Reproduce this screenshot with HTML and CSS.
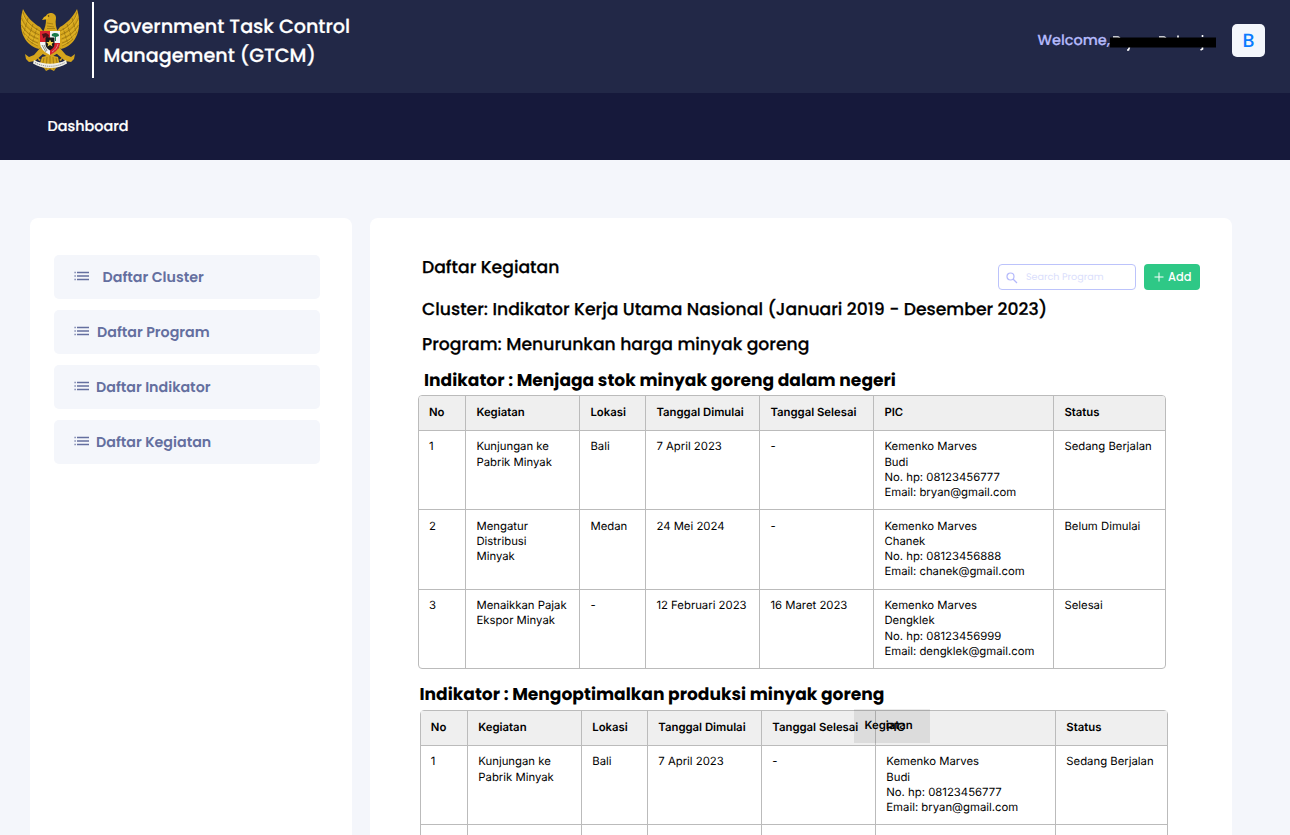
FILE: index.html
```html
<!DOCTYPE html>
<html lang="id">
<head>
<meta charset="utf-8">
<title>Government Task Control Management</title>
<link rel="stylesheet" href="styles.css">
</head>
<body>
<header class="topbar">
  <svg class="emblem" viewBox="0 0 60 64" aria-hidden="true">
    <g id="wing">
      <path fill="#d5a51c" d="M3 1C0 10 0 22 4 29c3 6 8 10 15 12l4-3V23l-3-4C14 16 7 9 3 1z"/>
      <path fill="none" stroke="#94700f" stroke-width=".7" d="M3 4c2 9 9 15 17 19M1.500 10c3 8 9 13 18 17M1.500 17c4 7 9 11 17 14M3 24c4 6 9 9 15 11M7 31c3 3 7 5 11 7M8 10l-4 14M13 16l-5 15M17 20l-5 16"/>
      <path fill="none" stroke="#e8c034" stroke-width=".7" d="M2.500 6c3 9 9 14 17 18.500M1.500 13c3 8 9 12 17 16M2 20c4 7 9 10 16 13M5 27c4 5 8 8 13 10"/>
    </g>
    <use href="#wing" transform="matrix(-1 0 0 1 60 0)"/>
    <path fill="#d5a51c" d="M23 24c2-4 3-8 3-12-1-3 0-6 4-7 4 0 6 2 6 5-1 5 0 10 2 14v21l-8 5-9-5z"/>
    <path fill="#e5b51f" d="M28 7l-4 2-2 3 6-1z"/>
    <circle cx="28.500" cy="8" r=".8" fill="#4b3605"/>
    <path fill="none" stroke="#94700f" stroke-width=".7" d="M27 15l6 1M27 18l7 1M27 20.500l8 0"/>
    <path fill="#d5a51c" d="M21 39l-7 8-5 2-4-3 1 5 3 3 6-1 9-8zM39 39l7 8 5 2 4-3-1 5-3 3-6-1-9-8z"/>
    <path fill="#d5a51c" d="M22 49l8-2 8 2 2 9-4 2-2 3-4-2-4 2-2-3-5-2z"/>
    <path fill="none" stroke="#94700f" stroke-width=".8" d="M24 50l-2 9M27 49l-1 13M30 48v14M33 49l1 13M36 50l2 9"/>
    <path fill="#d9232e" d="M20 23h10v12H20zM30 34h10c0 6-4 10-10 13z"/>
    <path fill="#f5f5f5" d="M30 23h10v12H30zM20 34h10v13c-6-3-10-7-10-13z"/>
    <path fill="#4c1218" d="M22 26l4-1 3 2-1 4h-1.500l-1-2.500-2 2z"/>
    <path fill="none" stroke="#8a8f86" stroke-width="1" d="M22 37l4 7M24 37l3 6"/>
    <path fill="none" stroke="#d9a0a0" stroke-width=".8" d="M38 36c-1 4-3 6-6 8"/>
    <path fill="#191919" d="M25.500 29.500h9v6c0 4-2 5-4.500 7-2.500-2-4.500-3-4.500-7z"/>
    <path fill="#18794a" d="M32 28c-1-2 1-3 3-3 3 0 4 1 4 3l-3 1v4h-1v-4z"/>
    <path fill="#f5d44b" d="M30 31.500l1.100 2.600h2.700l-2.100 1.800.8 2.700-2.500-1.600-2.500 1.600.8-2.700-2.100-1.800h2.700z"/>
    <path fill="#f0efe8" d="M14 52c9 5 23 5 32 0l1 3.500c-10 6-24 6-34 0z"/>
    <path fill="none" stroke="#888" stroke-width=".9" stroke-dasharray="1.300 .8" d="M15 54.500c9 5 21 5 30 0"/>
    <path fill="#d5a51c" d="M17 49l2 4 2-1zM43 49l-2 4-2-1z"/>
  </svg>
  <div class="rule"></div>
  <h1 class="brand">Government Task Control<br>Management (GTCM)</h1>
  <div class="user">
    <span class="welcome">Welcome,</span>
    <svg class="redacted" viewBox="0 0 106 20" aria-hidden="true">
      <path fill="none" stroke="#fff" stroke-width="1.600" d="M3 6h5l2 1M49 6h5l2 1M68 4.500v3M92.500 4v2M19.500 16l-1 3h-1.500M92.500 16v2l-2 1"/>
      <path d="M0 6.500h106v10H0z"/>
    </svg>
    <span class="avatar">B</span>
  </div>
</header>
<nav class="nav"><a>Dashboard</a></nav>
<main class="layout">
  <aside class="card side">
    <a class="item wide"><svg class="list" viewBox="0 0 16 10"><path d="M.500 1.500h1.200M3 1.500h12M.500 5h1.200M3 5h12M.500 8.500h1.200M3 8.500h12"/></svg><span>Daftar Cluster</span></a>
    <a class="item"><svg class="list" viewBox="0 0 16 10"><path d="M.500 1.500h1.200M3 1.500h12M.500 5h1.200M3 5h12M.500 8.500h1.200M3 8.500h12"/></svg><span>Daftar Program</span></a>
    <a class="item tight"><svg class="list" viewBox="0 0 16 10"><path d="M.500 1.500h1.200M3 1.500h12M.500 5h1.200M3 5h12M.500 8.500h1.200M3 8.500h12"/></svg><span>Daftar Indikator</span></a>
    <a class="item tight"><svg class="list" viewBox="0 0 16 10"><path d="M.500 1.500h1.200M3 1.500h12M.500 5h1.200M3 5h12M.500 8.500h1.200M3 8.500h12"/></svg><span>Daftar Kegiatan</span></a>
  </aside>
  <section class="card content">
    <div class="head">
      <h2 class="h">Daftar Kegiatan</h2>
      <div class="tools">
        <div class="search"><svg class="glass" viewBox="0 0 12 12"><circle cx="4.500" cy="4.500" r="3.500"/><path d="M7 7l4 4"/></svg><span>Search Program</span></div>
        <button class="add"><svg class="plus" viewBox="0 0 10 10"><path d="M5 .500v9M.500 5h9"/></svg><span>Add</span></button>
      </div>
    </div>
    <h2 class="h cluster">Cluster: Indikator Kerja Utama Nasional (Januari 2019 - Desember 2023)</h2>
    <h2 class="h program">Program: Menurunkan harga minyak goreng</h2>
    <h3 class="h ind ind1">Indikator : Menjaga stok minyak goreng dalam negeri</h3>
    <div class="table">
      <div class="row th"><div>No</div><div>Kegiatan</div><div>Lokasi</div><div>Tanggal Dimulai</div><div>Tanggal Selesai</div><div>PIC</div><div>Status</div></div>
      <div class="row"><div>1</div><div>Kunjungan ke<br>Pabrik Minyak</div><div>Bali</div><div>7 April 2023</div><div>-</div><div>Kemenko Marves<br>Budi<br>No. hp: 08123456777<br>Email: bryan@gmail.com</div><div>Sedang Berjalan</div></div>
      <div class="row"><div>2</div><div>Mengatur<br>Distribusi<br>Minyak</div><div>Medan</div><div>24 Mei 2024</div><div>-</div><div>Kemenko Marves<br>Chanek<br>No. hp: 08123456888<br>Email: chanek@gmail.com</div><div>Belum Dimulai</div></div>
      <div class="row"><div>3</div><div>Menaikkan Pajak<br>Ekspor Minyak</div><div>-</div><div>12 Februari 2023</div><div>16 Maret 2023</div><div>Kemenko Marves<br>Dengklek<br>No. hp: 08123456999<br>Email: dengklek@gmail.com</div><div>Selesai</div></div>
    </div>
    <h3 class="h ind ind2">Indikator : Mengoptimalkan produksi minyak goreng</h3>
    <div class="table second">
      <div class="row th"><div>No</div><div>Kegiatan</div><div>Lokasi</div><div>Tanggal Dimulai</div><div>Tanggal Selesai</div><div>PIC</div><div>Status</div></div>
      <div class="row"><div>1</div><div>Kunjungan ke<br>Pabrik Minyak</div><div>Bali</div><div>7 April 2023</div><div>-</div><div>Kemenko Marves<br>Budi<br>No. hp: 08123456777<br>Email: bryan@gmail.com</div><div>Sedang Berjalan</div></div>
      <div class="row"><div></div><div></div><div></div><div></div><div></div><div></div><div></div></div>
      <div class="drag">Kegiatan</div>
    </div>
  </section>
</main>
</body>
</html>
```
FILE: styles.css
```css
* { box-sizing: border-box; }
body { margin: 0; height: 835px; overflow: hidden; background: #f4f6fb; font-family: Poppins, Inter, sans-serif; color: #000; text-rendering: geometricPrecision; }
h1, h2, h3 { margin: 0; }
.topbar { height: 93px; background: #222847; display: flex; align-items: flex-start; padding-left: 20px; }
.emblem { width: 60px; height: 64px; margin-top: 8px; }
.rule { width: 2px; height: 76px; margin: 2px 0 0 12px; background: #fff; }
.brand { margin: 13px 0 0 9.5px; font-size: 19.15px; line-height: 28.6px; font-weight: 500; color: #fff; -webkit-text-stroke: .2px; white-space: nowrap; }
.user { margin: 24px 25px 0 auto; display: flex; align-items: center; height: 33px; }
.welcome { padding-top: 2px; font-size: 14.5px; font-weight: 500; color: #b4b9fb; -webkit-text-stroke: .2px; }
.redacted { width: 106px; height: 20px; }
.avatar { width: 33px; height: 33px; margin-left: 16px; border-radius: 5px; background: #f4f6fb; color: #0a7cff; font-size: 19px; font-weight: 500; line-height: 34px; text-align: center; }
.nav { height: 67px; background: #16193b; display: flex; align-items: center; padding: 2px 0 0 47.5px; font-size: 14.4px; font-weight: 500; color: #fff; -webkit-text-stroke: .2px; }
.layout { display: flex; gap: 18px; padding: 58px 58px 0 30px; }
.card { height: 617px; background: #fff; border-radius: 8px 8px 0 0; overflow: hidden; }
.side { width: 322px; padding: 37px 32px 0 24px; display: flex; flex-direction: column; gap: 11px; }
.item { height: 44px; flex: none; background: #f4f6fb; border-radius: 5px; display: flex; align-items: center; gap: 7px; padding: 1px 0 0 20px; font-size: 14.25px; font-weight: 600; color: #646f9f; }
.list { width: 16px; height: 10px; margin-top: -3px; fill: none; stroke: #646f9f; stroke-width: 1.4; }
.item.wide { gap: 12.5px; }
.item.tight { gap: 6px; }
.content { width: 862px; padding: 36px 32px 0 48px; }
.h { font-size: 17.22px; font-weight: 500; line-height: 29px; height: 28px; -webkit-text-stroke: .25px; white-space: nowrap; padding-left: 4px; }
.head { display: flex; justify-content: space-between; height: 38px; }
.tools { display: flex; gap: 8px; padding-top: 10px; }
.search { width: 138px; height: 26px; border: 1px solid #bcc3fb; border-radius: 4px; display: flex; align-items: center; padding: 1px 0 0 7px; font-size: 9.55px; color: #dadefc; }
.glass { width: 12px; height: 12px; fill: none; stroke: #b4b9fb; stroke-width: 1.2; margin-right: 8px; }
.add { width: 56px; height: 26px; border: 0; border-radius: 4px; background: #2ec886; color: #fff; font: 500 11.4px Poppins, Inter, sans-serif; display: flex; align-items: center; padding: 0 0 0 10px; gap: 4px; }
.plus { width: 10px; height: 10px; stroke: #fff; fill: none; }
.cluster { margin-top: 4px; }
.program { margin-top: 7px; }
.ind { font-size: 17.1px; line-height: 28px; font-weight: 700; -webkit-text-stroke: 0; }
.ind1 { margin-top: 7px; padding-left: 6px; }
.ind2 { margin-top: 11px; padding-left: 1.5px; }
.table { position: relative; width: 748.5px; margin: 1px 0 0 -.4px; border: 1px solid #bbb; border-radius: 4px; font: 11.33px/15.2px Inter, sans-serif; overflow: hidden; }
.row { display: grid; grid-template-columns: 46.500px 114px 66px 114px 114px 180px 1fr; height: 79.4px; }
.row + .row { border-top: 1px solid #bbb; }
.row > div { padding: 8.700px 0 0 10.3px; white-space: nowrap; }
.row > div + div { border-left: 1px solid #bbb; }
.row.th { height: 33.800px; background: #efefef; font-weight: 600; }
.second { margin: 2px 0 0 1.5px; overflow: visible; }
.drag { position: absolute; left: 433px; top: -2px; width: 76px; height: 34px; background: rgba(0,0,0,.08); padding: 9px 0 0 11px; font-weight: 600; }
```
